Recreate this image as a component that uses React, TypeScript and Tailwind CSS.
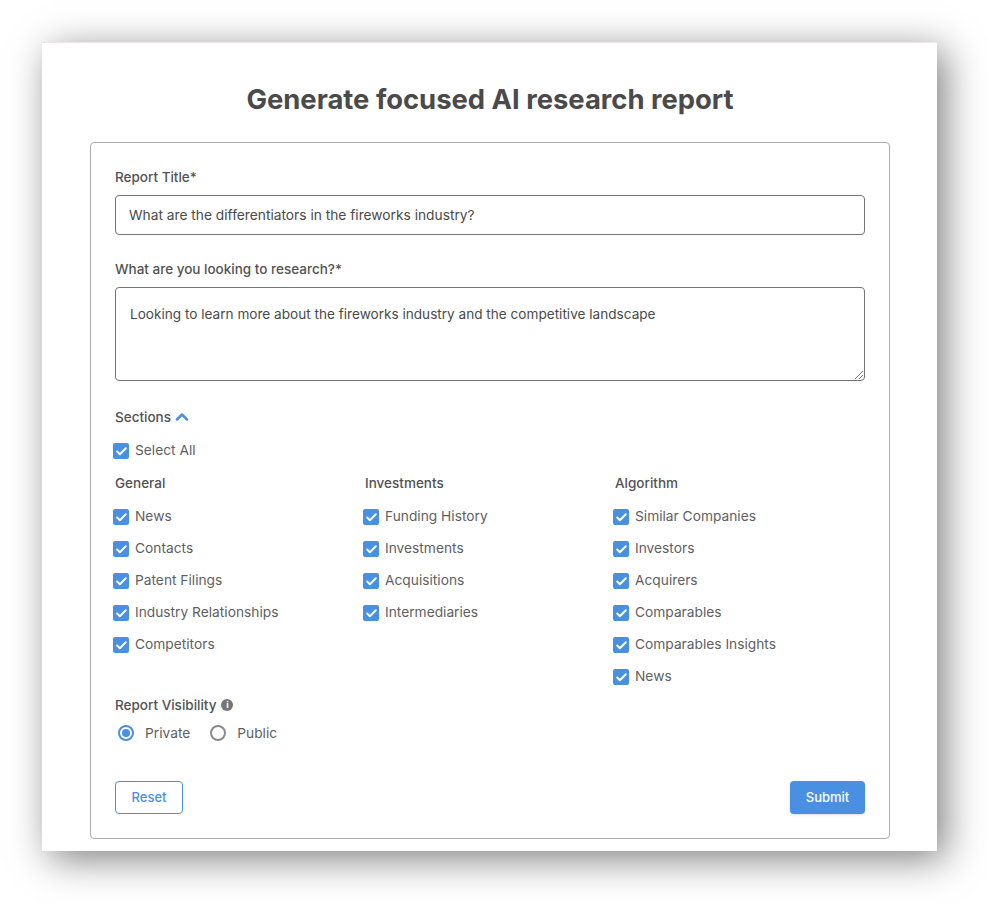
import { Check, ChevronUp } from "lucide-react";

const general = ["News", "Contacts", "Patent Filings", "Industry Relationships", "Competitors"];
const investments = ["Funding History", "Investments", "Acquisitions", "Intermediaries"];
const algorithm = ["Similar Companies", "Investors", "Acquirers", "Comparables", "Comparables Insights", "News"];

function CheckRow({ label }: { label: string }) {
  return (
    <div className="flex items-center h-8 gap-[6px] -ml-[2px] text-[13.75px]">
      <span className="flex items-center justify-center w-4 h-4 mt-[2px] rounded-[2px] bg-[#4a90e2]">
        <Check size={13} strokeWidth={3.5} className="text-white" />
      </span>
      <span>{label}</span>
    </div>
  );
}

function Column({ title, items }: { title: string; items: string[] }) {
  return (
    <div className="w-[250px]">
      <div className="h-[34px] flex items-center font-medium text-[#525252]">{title}</div>
      {items.map((item) => (
        <CheckRow key={item} label={item} />
      ))}
    </div>
  );
}

export default function App() {
  return (
    <div className="w-[988px] h-[903px] pt-[42px] pl-[42px] bg-white overflow-hidden font-['Inter',sans-serif]">
      <div className="w-[895px] h-[809px] bg-white border-t border-t-[#f3e3e8] shadow-[8px_8px_36px_rgba(0,0,0,0.5)] pt-[38px] pl-12 pr-[47px] text-[13.5px] text-[#5f5f5f]">
        <h1 className="h-[38px] flex items-center justify-center text-[27.4px] font-bold text-[#4a4a4a]">
          Generate focused AI research report
        </h1>
        <div className="mt-[23px] h-[697px] border border-[#ababab] rounded-[4px] px-6 pt-6">
          <label className="block h-[20px] leading-[20px] font-medium text-[#525252]">Report Title*</label>
          <div className="mt-[8px] h-10 border border-[#757575] rounded-[4px] flex items-center px-[13px] text-[13.75px] text-[#4a4a4a]">
            What are the differentiators in the fireworks industry?
          </div>
          <label className="block mt-6 h-[20px] leading-[20px] font-medium text-[#525252]">
            What are you looking to research?*
          </label>
          <div className="relative mt-[8px] h-[94px] border border-[#757575] rounded-[4px] px-[14px] pt-[16px] leading-[20px] text-[13.6px] text-[#4a4a4a]">
            Looking to learn more about the fireworks industry and the competitive landscape
            <svg className="absolute right-0 bottom-0" width="10" height="10" viewBox="0 0 10 10">
              <path d="M1 9 L9 1 M5 9 L9 5" stroke="#777" strokeWidth="1" fill="none" />
            </svg>
          </div>
          <div className="mt-[26px] h-5 flex items-center gap-[1px] font-medium text-[#525252]">
            Sections
            <ChevronUp size={20} strokeWidth={3} className="text-[#4a90e2]" />
          </div>
          <div className="mt-[7px]">
            <CheckRow label="Select All" />
          </div>
          <div className="flex">
            <Column title="General" items={general} />
            <Column title="Investments" items={investments} />
            <Column title="Algorithm" items={algorithm} />
          </div>
          <div className="mt-[3px] h-5 flex items-center gap-[5px] font-medium text-[#525252]">
            Report Visibility
            <span className="w-3 h-3 rounded-full bg-[#757575] text-white text-[9px] font-bold flex items-center justify-center">i</span>
          </div>
          <div className="mt-[8px] h-5 flex items-center text-[13.75px]">
            <span className="ml-[3px] w-4 h-4 rounded-full border-2 border-[#4a90e2] flex items-center justify-center">
              <span className="w-2 h-2 rounded-full bg-[#4a90e2]" />
            </span>
            <span className="ml-[11px]">Private</span>
            <span className="ml-[20px] w-4 h-4 rounded-full border-2 border-[#8a8a8a]" />
            <span className="ml-[11px]">Public</span>
          </div>
          <div className="mt-[38px] flex justify-between">
            <button className="w-[68px] h-[33px] rounded-[4px] border border-[#4a90e2] text-[#4a90e2] text-[13px] font-medium">
              Reset
            </button>
            <button className="w-[75px] h-[33px] rounded-[4px] bg-[#4a90e2] text-white text-[13px] font-medium shadow-sm">
              Submit
            </button>
          </div>
        </div>
      </div>
    </div>
  );
}
